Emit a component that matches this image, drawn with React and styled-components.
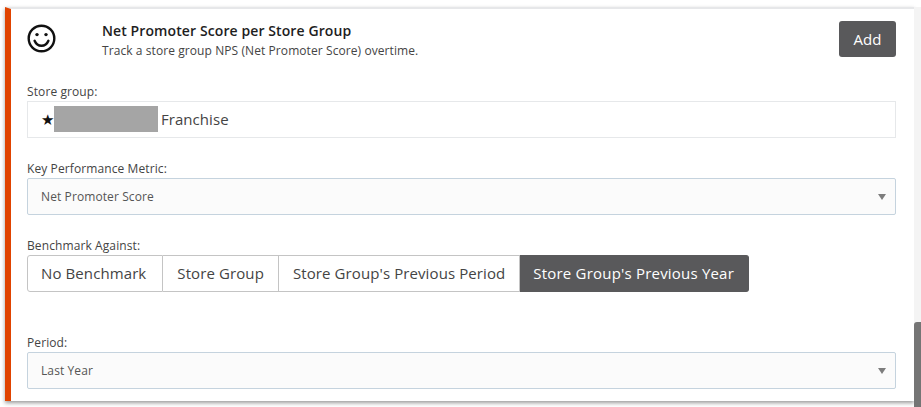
import React from 'react';
import styled, { createGlobalStyle } from 'styled-components';

const GlobalStyle = createGlobalStyle`
  html, body {
    margin: 0;
    padding: 0;
    background: #fff;
    overflow: hidden;
  }
  body {
    font-family: "Open Sans", "Liberation Sans", sans-serif;
  }
`;

const Page = styled.div`
  width: 921px;
  height: 407px;
  display: flex;
  align-items: flex-start;
  padding: 7px 0 0 5px;
  box-sizing: border-box;
  background: #fff;
`;

const Card = styled.section`
  width: 909px;
  height: 394px;
  box-sizing: border-box;
  border-top: 2px solid #e6e7e9;
  border-left: 6px solid #e04300;
  padding: 12px 18px 0 16px;
  background: #fff;
  box-shadow: 0 2px 4px rgba(0, 0, 0, 0.4);
`;

const Header = styled.header`
  display: flex;
  align-items: flex-start;
  height: 63px;
`;

const IconCell = styled.div`
  width: 75px;
  flex: none;
  padding-top: 3px;
  svg { display: block; }
`;

const HeaderText = styled.div`
  flex: 1;
  padding-top: 1px;
`;

const Title = styled.h2`
  margin: 0;
  font-size: 14px;
  line-height: 18px;
  font-weight: 600;
  letter-spacing: 0.1px;
  color: #1e1e1e;
`;

const Subtitle = styled.p`
  margin: 3px 0 0;
  font-size: 12px;
  line-height: 15px;
  letter-spacing: 0.08px;
  color: #444;
`;

const AddButton = styled.button`
  width: 57px;
  height: 36px;
  border: 0;
  border-radius: 3px;
  background: #59595b;
  color: #fff;
  font-family: inherit;
  font-size: 15px;
  padding: 0;
`;

const Field = styled.div`
  margin-bottom: ${(p) => p.$gap}px;
`;

const Label = styled.label`
  display: block;
  font-size: 12px;
  line-height: 15px;
  letter-spacing: 0.1px;
  color: #444;
  margin-bottom: 2px;
`;

const StoreBox = styled.div`
  height: 37px;
  box-sizing: border-box;
  border: 1px solid #e6e8ea;
  display: flex;
  align-items: center;
  padding: 0 0 1px 13px;
  font-size: 15px;
  letter-spacing: 0.05px;
  color: #444;
`;

const Star = styled.span`
  font-size: 15px;
  color: #111;
  width: 13px;
  letter-spacing: 0;
`;

const Redacted = styled.span`
  width: 104px;
  height: 26px;
  background: #a5a5a5;
  margin-right: 3px;
  flex: none;
`;

const Select = styled.div`
  height: 37px;
  box-sizing: border-box;
  border: 1px solid #c5d3de;
  border-radius: 2px;
  background: #fbfbfb;
  display: flex;
  align-items: center;
  justify-content: space-between;
  padding: 0 9px 0 13px;
  font-size: 12px;
  letter-spacing: 0.1px;
  color: #555;
`;

const Caret = styled.span`
  width: 0;
  height: 0;
  border-left: 4px solid transparent;
  border-right: 4px solid transparent;
  border-top: 6px solid #7d7d7d;
`;

const Segments = styled.div`
  display: inline-flex;
  height: 37px;
  box-sizing: border-box;
  vertical-align: top;
`;

const Segment = styled.div`
  display: flex;
  align-items: center;
  box-sizing: border-box;
  padding: 0 ${(p) => (p.$first ? 16 : 14)}px 2px ${(p) => (p.$first || p.$active ? 13 : 14)}px;
  font-size: 15px;
  letter-spacing: ${(p) => (p.$active ? 0.2 : 0.1)}px;
  background: ${(p) => (p.$active ? '#59595b' : '#fff')};
  color: ${(p) => (p.$active ? '#fff' : '#444')};
  font-weight: ${(p) => (p.$active ? 500 : 400)};
  border: 1px solid ${(p) => (p.$active ? '#59595b' : '#c4c4c4')};
  border-left-width: ${(p) => (p.$first ? 1 : 0)}px;
  border-radius: ${(p) => (p.$first ? '3px 0 0 3px' : p.$last ? '0 3px 3px 0' : '0')};
`;

const Scrollbar = styled.div`
  width: 7px;
  height: 400px;
  display: flex;
  flex-direction: column;
  justify-content: flex-end;
  background: #f4f4f4;
`;

const ScrollThumb = styled.div`
  height: 85px;
  background: #757575;
  border-radius: 3px 0 0 0;
`;

const Smiley = () => (
  <svg width="29" height="29" viewBox="0 0 29 29" fill="none" stroke="#111" strokeWidth="2.4">
    <circle cx="14.5" cy="14.5" r="12.8" />
    <path d="M7.6 16.8c1.4 3.4 3.9 5 6.9 5s5.5-1.6 6.9-5" strokeLinecap="round" />
    <circle cx="10" cy="10.6" r="1.7" fill="#111" stroke="none" />
    <circle cx="19" cy="10.6" r="1.7" fill="#111" stroke="none" />
  </svg>
);

const benchmarks = ['No Benchmark', 'Store Group', "Store Group's Previous Period", "Store Group's Previous Year"];

export default function App() {
  return (
    <Page>
      <GlobalStyle />
      <Card>
        <Header>
          <IconCell>
            <Smiley />
          </IconCell>
          <HeaderText>
            <Title>Net Promoter Score per Store Group</Title>
            <Subtitle>Track a store group NPS (Net Promoter Score) overtime.</Subtitle>
          </HeaderText>
          <AddButton>Add</AddButton>
        </Header>
        <Field $gap={23}>
          <Label>Store group:</Label>
          <StoreBox>
            <Star>★</Star>
            <Redacted />
            Franchise
          </StoreBox>
        </Field>
        <Field $gap={23}>
          <Label>Key Performance Metric:</Label>
          <Select>
            Net Promoter Score
            <Caret />
          </Select>
        </Field>
        <Field $gap={43}>
          <Label>Benchmark Against:</Label>
          <Segments>
            {benchmarks.map((b, i) => (
              <Segment key={b} $first={i === 0} $last={i === 3} $active={i === 3}>
                {b}
              </Segment>
            ))}
          </Segments>
        </Field>
        <Field $gap={0}>
          <Label>Period:</Label>
          <Select>
            Last Year
            <Caret />
          </Select>
        </Field>
      </Card>
      <Scrollbar>
        <ScrollThumb />
      </Scrollbar>
    </Page>
  );
}
